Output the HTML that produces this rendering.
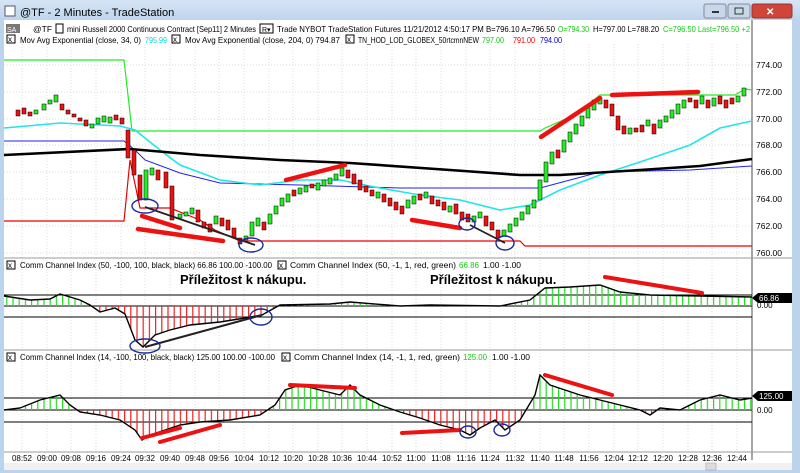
<!DOCTYPE html>
<html><head><meta charset="utf-8"><style>
body{margin:0;width:800px;height:473px;overflow:hidden;background:#bcd3ec;font-family:"Liberation Sans",sans-serif}
svg{position:absolute;left:0;top:0}
</style></head><body>
<svg width="800" height="473" viewBox="0 0 800 473" xmlns="http://www.w3.org/2000/svg" font-family="Liberation Sans, sans-serif">
<defs>
<pattern id="gp" width="6.2" height="10" patternUnits="userSpaceOnUse"><rect x="0" y="0" width="1.2" height="10" fill="#22dd22"/></pattern>
<pattern id="rp" width="6.2" height="10" patternUnits="userSpaceOnUse"><rect x="0" y="0" width="1.2" height="10" fill="#ee2222"/></pattern>
<clipPath id="c2t"><rect x="0" y="270" width="752" height="36"/></clipPath>
<clipPath id="c2b"><rect x="0" y="306" width="752" height="46"/></clipPath>
<clipPath id="c3t"><rect x="0" y="362" width="752" height="48"/></clipPath>
<clipPath id="c3b"><rect x="0" y="410" width="752" height="42"/></clipPath>
<linearGradient id="tb" x1="0" y1="0" x2="0" y2="1"><stop offset="0" stop-color="#d6e5f5"/><stop offset="1" stop-color="#bcd3ec"/></linearGradient>
</defs>
<rect x="0" y="0" width="800" height="22" fill="url(#tb)"/>
<rect x="5" y="6" width="10" height="10" fill="#fff" stroke="#557" stroke-width="1"/>
<text x="20" y="16" font-size="11" fill="#000">@TF - 2 Minutes - TradeStation</text>
<rect x="704" y="4" width="22" height="14" rx="2" fill="#c8d8ea" stroke="#889"/>
<rect x="728" y="4" width="22" height="14" rx="2" fill="#c8d8ea" stroke="#889"/>
<rect x="752" y="4" width="40" height="14" rx="2" fill="#d0453a" stroke="#933"/>
<text x="766" y="15" font-size="10" fill="#fff" font-weight="bold">✕</text>
<rect x="712" y="11" width="7" height="2" fill="#333"/>
<rect x="735" y="8" width="8" height="6" fill="none" stroke="#333"/>
<rect x="4" y="20" width="788" height="450" fill="#fff"/>
<!-- grid -->
<g stroke="#ddd" stroke-dasharray="1,2" stroke-width="1">
<path d="M22 44V450M47 44V450M71 44V450M96 44V450M121 44V450M145 44V450M170 44V450M195 44V450M219 44V450M244 44V450M269 44V450M293 44V450M318 44V450M342 44V450M367 44V450M392 44V450M416 44V450M441 44V450M466 44V450M490 44V450M515 44V450M540 44V450M564 44V450M589 44V450M614 44V450M638 44V450M663 44V450M688 44V450M712 44V450M737 44V450"/>
<path d="M4 65H752M4 92H752M4 119H752M4 145H752M4 172H752M4 199H752M4 226H752M4 253H752"/>
</g>
<!-- headers -->
<g font-size="8.5" fill="#000" lengthAdjust="spacingAndGlyphs">
<rect x="6" y="24" width="14" height="9" fill="#777"/><text x="7" y="32" font-size="7" fill="#fff">SA</text>
<text x="33" y="32">@TF</text><rect x="56" y="24" width="7" height="9" fill="none" stroke="#000"/>
<text x="67" y="32" textLength="189" lengthAdjust="spacingAndGlyphs">mini Russell 2000 Continuous Contract [Sep11]  2 Minutes</text>
<rect x="260" y="24" width="13" height="9" fill="none" stroke="#000"/><text x="262" y="32" font-size="7">R▾</text>
<text x="277" y="32" textLength="278" lengthAdjust="spacingAndGlyphs">Trade  NYBOT  TradeStation  Futures  11/21/2012  4:50:17 PM  B=796.10  A=796.50</text>
<text x="558" y="32" fill="#11cc11" textLength="31" lengthAdjust="spacingAndGlyphs">O=794.30</text><text x="593" y="32" textLength="66" lengthAdjust="spacingAndGlyphs">H=797.00  L=788.20</text><text x="663" y="32" fill="#11cc11" textLength="87" lengthAdjust="spacingAndGlyphs">C=796.50  Last=796.50  +2</text>
<rect x="7" y="35" width="8" height="8" fill="none" stroke="#000"/><text x="8" y="42" font-size="8">x</text>
<text x="20" y="43" textLength="121" lengthAdjust="spacingAndGlyphs">Mov Avg Exponential  (close, 34, 0)</text><text x="145" y="43" fill="#00dddd" textLength="22" lengthAdjust="spacingAndGlyphs">795.99</text>
<rect x="172" y="35" width="8" height="8" fill="none" stroke="#000"/><text x="173" y="42" font-size="8">x</text>
<text x="185" y="43" textLength="155" lengthAdjust="spacingAndGlyphs">Mov Avg Exponential  (close, 204, 0)  794.87</text>
<rect x="346" y="35" width="8" height="8" fill="none" stroke="#000"/><text x="347" y="42" font-size="8">x</text>
<text x="358" y="43" textLength="121" lengthAdjust="spacingAndGlyphs">TN_HOD_LOD_GLOBEX_50rtcmnNEW</text><text x="482" y="43" fill="#11cc11" textLength="22" lengthAdjust="spacingAndGlyphs">797.00</text><text x="513" y="43" fill="#ee0000" textLength="22" lengthAdjust="spacingAndGlyphs">791.00</text><text x="540" y="43" fill="#0000cc" textLength="22" lengthAdjust="spacingAndGlyphs">794.00</text>
</g>
<!-- axis separators -->
<path d="M752 20V460" stroke="#888" stroke-width="1.5"/>
<path d="M4 258H792M4 350H792M4 452H792" stroke="#999"/>
<!-- price labels -->
<g font-size="8.5" fill="#000">
<text x="756" y="68">774.00</text><text x="756" y="95">772.00</text><text x="756" y="122">770.00</text><text x="756" y="148">768.00</text><text x="756" y="175">766.00</text><text x="756" y="202">764.00</text><text x="756" y="229">762.00</text><text x="756" y="256">760.00</text>
</g>
<!-- HOD/LOD/EMAs -->
<polyline fill="none" stroke="#22ee22" stroke-width="1.2" points="4,60 124,60 132,131 540,131 545,128 575,115 600,95 690,95 735,95 745,89 752,90"/>
<polyline fill="none" stroke="#ee0000" stroke-width="1.2" points="4,221 124,221 130,160 140,208 170,208 200,220 215,230 240,241 520,241 525,246 752,246"/>
<polyline fill="none" stroke="#2222ee" stroke-width="1" points="4,141 124,141 135,150 145,160 180,173 220,183 300,185 400,188 540,188 600,172 690,170 752,166"/>
<polyline fill="none" stroke="#22e5e5" stroke-width="1.6" points="4,128 60,123 120,126 135,130 160,150 180,165 220,180 260,185 300,180 340,180 380,188 420,195 460,200 500,210 530,205 560,190 600,175 640,162 690,145 720,128 752,121"/>
<polyline fill="none" stroke="#000" stroke-width="2.6" points="4,155 130,149 200,155 280,160 350,163 450,170 520,175 560,175 640,170 700,166 752,159"/>
<!-- candles -->
<g stroke="#000" stroke-width="0.5">
<g fill="#ee1111">
<rect x="16" y="110" width="4" height="6"/><rect x="22" y="108" width="4" height="6"/><rect x="28" y="112" width="4" height="4"/><rect x="60" y="104" width="4" height="6"/><rect x="66" y="110" width="4" height="4"/><rect x="72" y="114" width="4" height="3"/><rect x="78" y="118" width="4" height="3"/><rect x="84" y="120" width="4" height="6"/><rect x="114" y="115" width="4" height="5"/><rect x="120" y="118" width="4" height="6"/><rect x="126" y="130" width="4" height="28"/><rect x="132" y="150" width="4" height="25"/><rect x="138" y="175" width="4" height="25"/><rect x="156" y="170" width="4" height="10"/><rect x="164" y="172" width="4" height="16"/><rect x="170" y="186" width="4" height="34"/><rect x="196" y="210" width="4" height="12"/><rect x="202" y="222" width="4" height="6"/><rect x="208" y="224" width="4" height="8"/><rect x="220" y="218" width="4" height="8"/><rect x="226" y="220" width="4" height="10"/><rect x="232" y="228" width="4" height="10"/><rect x="238" y="238" width="4" height="6"/><rect x="262" y="222" width="4" height="8"/><rect x="292" y="190" width="4" height="6"/><rect x="310" y="184" width="4" height="4"/><rect x="346" y="170" width="4" height="8"/><rect x="352" y="174" width="4" height="10"/><rect x="358" y="180" width="4" height="10"/><rect x="364" y="186" width="4" height="6"/><rect x="370" y="190" width="4" height="6"/><rect x="382" y="194" width="4" height="8"/><rect x="388" y="198" width="4" height="8"/><rect x="394" y="202" width="4" height="8"/><rect x="400" y="206" width="4" height="8"/><rect x="418" y="194" width="4" height="6"/><rect x="430" y="196" width="4" height="8"/><rect x="436" y="200" width="4" height="6"/><rect x="442" y="202" width="4" height="8"/><rect x="454" y="204" width="4" height="10"/><rect x="460" y="212" width="4" height="8"/><rect x="466" y="214" width="4" height="8"/><rect x="484" y="216" width="4" height="10"/><rect x="490" y="222" width="4" height="8"/><rect x="496" y="230" width="4" height="8"/><rect x="556" y="150" width="4" height="8"/><rect x="604" y="100" width="4" height="8"/><rect x="610" y="104" width="4" height="12"/><rect x="616" y="116" width="4" height="14"/><rect x="622" y="126" width="4" height="8"/><rect x="634" y="128" width="4" height="4"/><rect x="640" y="125" width="4" height="7"/><rect x="652" y="124" width="4" height="10"/><rect x="688" y="98" width="4" height="4"/><rect x="694" y="100" width="4" height="8"/><rect x="706" y="100" width="4" height="8"/><rect x="718" y="96" width="4" height="8"/><rect x="724" y="100" width="4" height="8"/><rect x="730" y="98" width="4" height="6"/>
</g>
<g fill="#22ee22">
<rect x="34" y="110" width="4" height="4"/><rect x="42" y="104" width="4" height="6"/><rect x="48" y="100" width="4" height="4"/><rect x="54" y="95" width="4" height="7"/><rect x="90" y="124" width="4" height="4"/><rect x="96" y="118" width="4" height="6"/><rect x="102" y="116" width="4" height="6"/><rect x="108" y="117" width="4" height="6"/><rect x="144" y="170" width="4" height="30"/><rect x="150" y="168" width="4" height="7"/><rect x="178" y="214" width="4" height="4"/><rect x="184" y="212" width="4" height="4"/><rect x="190" y="208" width="4" height="6"/><rect x="214" y="216" width="4" height="8"/><rect x="244" y="236" width="4" height="4"/><rect x="250" y="222" width="4" height="14"/><rect x="256" y="218" width="4" height="8"/><rect x="268" y="214" width="4" height="10"/><rect x="274" y="206" width="4" height="8"/><rect x="280" y="198" width="4" height="8"/><rect x="286" y="194" width="4" height="8"/><rect x="298" y="188" width="4" height="6"/><rect x="304" y="186" width="4" height="6"/><rect x="316" y="183" width="4" height="7"/><rect x="322" y="180" width="4" height="6"/><rect x="328" y="178" width="4" height="6"/><rect x="334" y="174" width="4" height="6"/><rect x="340" y="168" width="4" height="8"/><rect x="376" y="192" width="4" height="6"/><rect x="406" y="200" width="4" height="8"/><rect x="412" y="196" width="4" height="8"/><rect x="424" y="192" width="4" height="6"/><rect x="448" y="206" width="4" height="6"/><rect x="472" y="216" width="4" height="6"/><rect x="478" y="212" width="4" height="6"/><rect x="502" y="230" width="4" height="6"/><rect x="508" y="224" width="4" height="8"/><rect x="514" y="218" width="4" height="8"/><rect x="520" y="212" width="4" height="8"/><rect x="526" y="206" width="4" height="8"/><rect x="532" y="200" width="4" height="8"/><rect x="538" y="180" width="4" height="20"/><rect x="544" y="162" width="4" height="20"/><rect x="550" y="152" width="4" height="12"/><rect x="562" y="140" width="4" height="12"/><rect x="568" y="132" width="4" height="10"/><rect x="574" y="124" width="4" height="10"/><rect x="580" y="116" width="4" height="10"/><rect x="586" y="108" width="4" height="10"/><rect x="592" y="100" width="4" height="10"/><rect x="598" y="98" width="4" height="6"/><rect x="628" y="128" width="4" height="6"/><rect x="646" y="120" width="4" height="6"/><rect x="658" y="120" width="4" height="8"/><rect x="664" y="116" width="4" height="6"/><rect x="670" y="110" width="4" height="8"/><rect x="676" y="104" width="4" height="10"/><rect x="682" y="100" width="4" height="8"/><rect x="700" y="96" width="4" height="8"/><rect x="712" y="98" width="4" height="8"/><rect x="736" y="96" width="4" height="6"/><rect x="742" y="88" width="4" height="8"/>
</g>
</g>
<!-- annotations main -->
<g stroke="#ee1111" stroke-width="4.5" stroke-linecap="round">
<path d="M142 216L180 228M138 229L223 241M286 180L345 165M412 220L460 228M541 137L600 98M612 95L698 92"/>
</g>
<g stroke="#222" stroke-width="1.8"><path d="M145 207L255 245M470 225L505 243"/></g>
<g fill="none" stroke="#1a2a9a" stroke-width="1.4">
<ellipse cx="145" cy="206" rx="13" ry="7"/><ellipse cx="251" cy="245" rx="12" ry="7"/><ellipse cx="467" cy="224" rx="8" ry="6"/><ellipse cx="505" cy="243" rx="9" ry="7"/>
</g>
<!-- panel 2 -->
<g font-size="8.5" fill="#000">
<rect x="7" y="261" width="8" height="8" fill="none" stroke="#000"/><text x="8" y="268" font-size="8">x</text>
<text x="20" y="268" textLength="252" lengthAdjust="spacingAndGlyphs">Comm Channel Index  (50, -100, 100, black, black)  66.86  100.00  -100.00</text>
<rect x="278" y="261" width="8" height="8" fill="none" stroke="#000"/><text x="279" y="268" font-size="8">x</text>
<text x="290" y="268" textLength="166" lengthAdjust="spacingAndGlyphs">Comm Channel Index  (50, -1, 1, red, green)</text><text x="459" y="268" fill="#11cc11" textLength="20" lengthAdjust="spacingAndGlyphs">66.86</text><text x="483" y="268" textLength="38" lengthAdjust="spacingAndGlyphs">1.00  -1.00</text>
</g>
<text x="180" y="284" font-size="13" font-weight="bold">Příležitost k nákupu.</text>
<text x="430" y="284" font-size="13" font-weight="bold">Příležitost k nákupu.</text>
<path d="M4 295H752M4 306H752M4 317H752" stroke="#000" stroke-width="1"/>
<g>
<polygon clip-path="url(#c2t)" fill="url(#gp)" points="4,306 4,296 30,300 50,299 60,294 80,300 90,305 100,312 115,308 125,314 135,340 143,347 155,335 170,330 190,325 220,322 245,318 262,315 280,305 330,304 350,302 400,306 430,305 500,306 530,300 545,288 570,287 600,285 620,292 650,295 700,296 752,297 752,306"/>
<polygon clip-path="url(#c2b)" fill="url(#rp)" points="4,306 4,296 30,300 50,299 60,294 80,300 90,305 100,312 115,308 125,314 135,340 143,347 155,335 170,330 190,325 220,322 245,318 262,315 280,305 330,304 350,302 400,306 430,305 500,306 530,300 545,288 570,287 600,285 620,292 650,295 700,296 752,297 752,306"/>
<polyline fill="none" stroke="#000" stroke-width="1.4" points="4,296 30,300 50,299 60,294 80,300 90,305 100,312 115,308 125,314 135,340 143,347 155,335 170,330 190,325 220,322 245,318 262,315 280,305 330,304 350,302 400,306 430,305 500,306 530,300 545,288 570,287 600,285 620,292 650,295 700,296 752,297"/>
</g>
<path d="M145 347L262 315" stroke="#222" stroke-width="2"/>
<path d="M605 277L702 293" stroke="#ee1111" stroke-width="4" stroke-linecap="round"/>
<g fill="none" stroke="#1a2a9a" stroke-width="1.4"><ellipse cx="145" cy="346" rx="15" ry="7"/><ellipse cx="261" cy="317" rx="11" ry="8"/></g>
<polygon points="752,298 758,293 792,293 792,303 758,303" fill="#000"/><text x="759" y="301" font-size="8" fill="#fff">66.86</text>
<text x="757" y="308" font-size="8">0.00</text>
<!-- panel 3 -->
<g font-size="8.5" fill="#000">
<rect x="7" y="353" width="8" height="8" fill="none" stroke="#000"/><text x="8" y="360" font-size="8">x</text>
<text x="20" y="360" textLength="255" lengthAdjust="spacingAndGlyphs">Comm Channel Index  (14, -100, 100, black, black)  125.00  100.00  -100.00</text>
<rect x="282" y="353" width="8" height="8" fill="none" stroke="#000"/><text x="283" y="360" font-size="8">x</text>
<text x="294" y="360" textLength="166" lengthAdjust="spacingAndGlyphs">Comm Channel Index  (14, -1, 1, red, green)</text><text x="463" y="360" fill="#11cc11" textLength="24" lengthAdjust="spacingAndGlyphs">125.00</text><text x="492" y="360" textLength="38" lengthAdjust="spacingAndGlyphs">1.00  -1.00</text>
</g>
<path d="M4 398H752M4 410H752M4 422H752" stroke="#000" stroke-width="1"/>
<polygon clip-path="url(#c3t)" fill="url(#gp)" points="4,410 20,408 40,400 60,395 70,405 80,412 100,415 120,420 135,430 142,440 150,435 165,430 180,425 200,422 230,420 260,415 275,405 285,390 300,385 320,390 340,395 350,385 360,395 380,405 400,412 420,418 440,425 460,430 470,435 480,428 495,420 505,430 520,420 535,395 540,375 550,385 580,395 620,405 640,410 650,415 660,408 680,410 700,400 720,395 740,400 752,398 752,410"/>
<polygon clip-path="url(#c3b)" fill="url(#rp)" points="4,410 20,408 40,400 60,395 70,405 80,412 100,415 120,420 135,430 142,440 150,435 165,430 180,425 200,422 230,420 260,415 275,405 285,390 300,385 320,390 340,395 350,385 360,395 380,405 400,412 420,418 440,425 460,430 470,435 480,428 495,420 505,430 520,420 535,395 540,375 550,385 580,395 620,405 640,410 650,415 660,408 680,410 700,400 720,395 740,400 752,398 752,410"/>
<polyline fill="none" stroke="#000" stroke-width="1.4" points="4,410 20,408 40,400 60,395 70,405 80,412 100,415 120,420 135,430 142,440 150,435 165,430 180,425 200,422 230,420 260,415 275,405 285,390 300,385 320,390 340,395 350,385 360,395 380,405 400,412 420,418 440,425 460,430 470,435 480,428 495,420 505,430 520,420 535,395 540,375 550,385 580,395 620,405 640,410 650,415 660,408 680,410 700,400 720,395 740,400 752,398"/>
<g stroke="#ee1111" stroke-width="4" stroke-linecap="round"><path d="M290 385L355 388M142 438L180 428M160 442L220 425M402 433L460 430M545 375L612 395"/></g>
<g fill="none" stroke="#1a2a9a" stroke-width="1.4"><ellipse cx="468" cy="432" rx="8" ry="6"/><ellipse cx="502" cy="430" rx="8" ry="6"/></g>
<polygon points="752,396 758,391 792,391 792,401 758,401" fill="#000"/><text x="759" y="399" font-size="8" fill="#fff">125.00</text>
<text x="757" y="413" font-size="8">0.00</text>
<!-- time axis -->
<g font-size="8" fill="#000" text-anchor="middle">
<text x="22" y="461">08:52</text><text x="47" y="461">09:00</text><text x="71" y="461">09:08</text><text x="96" y="461">09:16</text><text x="121" y="461">09:24</text><text x="145" y="461">09:32</text><text x="170" y="461">09:40</text><text x="195" y="461">09:48</text><text x="219" y="461">09:56</text><text x="244" y="461">10:04</text><text x="269" y="461">10:12</text><text x="293" y="461">10:20</text><text x="318" y="461">10:28</text><text x="342" y="461">10:36</text><text x="367" y="461">10:44</text><text x="392" y="461">10:52</text><text x="416" y="461">11:00</text><text x="441" y="461">11:08</text><text x="466" y="461">11:16</text><text x="490" y="461">11:24</text><text x="515" y="461">11:32</text><text x="540" y="461">11:40</text><text x="564" y="461">11:48</text><text x="589" y="461">11:56</text><text x="614" y="461">12:04</text><text x="638" y="461">12:12</text><text x="663" y="461">12:20</text><text x="688" y="461">12:28</text><text x="712" y="461">12:36</text><text x="737" y="461">12:44</text>
</g>
<rect x="4" y="463" width="788" height="7" fill="#f0f0f0"/>
<rect x="706" y="463" width="10" height="7" fill="#dcdcdc" stroke="#999" stroke-width="0.5"/>
</svg>
</body></html>
